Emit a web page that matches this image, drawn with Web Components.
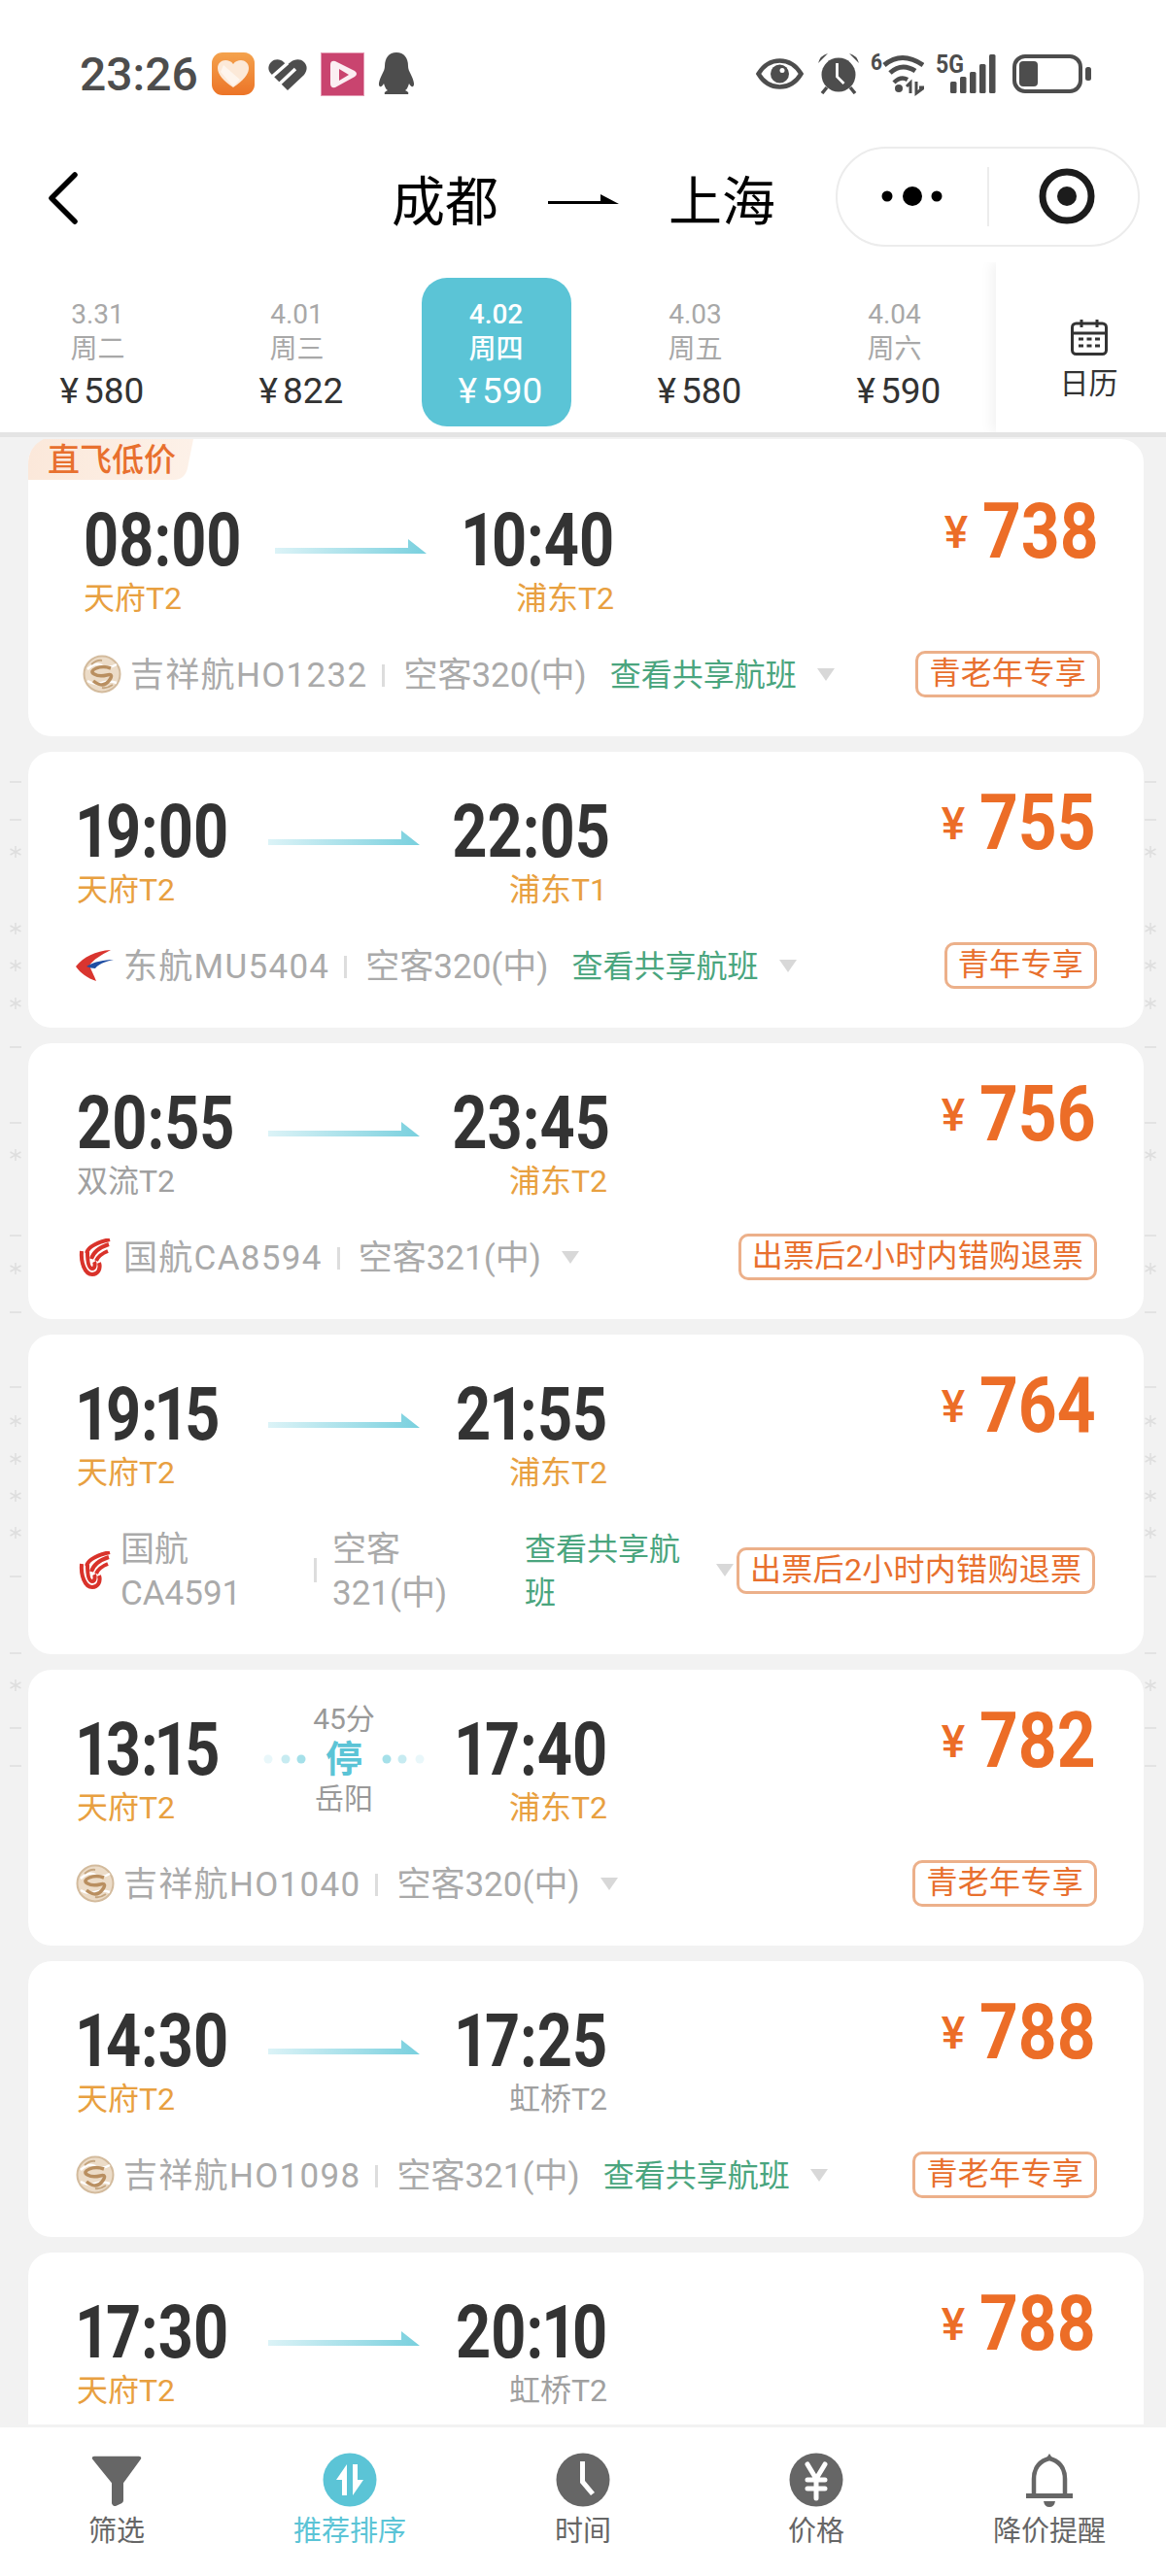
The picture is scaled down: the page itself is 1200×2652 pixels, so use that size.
<!DOCTYPE html>
<html lang="zh">
<head>
<meta charset="utf-8">
<title>成都 - 上海</title>
<style>
    html, body {
        margin: 0;
        height: 2652px;
        overflow: hidden;
        background: #fff;
        font-family: Roboto, "Noto Sans CJK SC", sans-serif;
    }

    #app {
        display: flex;
        flex-direction: column;
        height: 2652px;
    }
</style>
</head>
<body>
<div id="app">
    <status-bar time="23:26"></status-bar>
    <title-bar from="成都" to="上海"></title-bar>
    <date-tabs>
        <date-tab date="3.31" week="周二" price="580"></date-tab>
        <date-tab date="4.01" week="周三" price="822"></date-tab>
        <date-tab date="4.02" week="周四" price="590" selected></date-tab>
        <date-tab date="4.03" week="周五" price="580"></date-tab>
        <date-tab date="4.04" week="周六" price="590"></date-tab>
    </date-tabs>

    <flight-list>
        <flight-card first dep="08:00" dep-term="天府T2" arr="10:40" arr-term="浦东T2" price="738"
            airline="吉祥航HO1232" plane="空客320(中)" share="查看共享航班" logo="juneyao" badge="直飞低价">青老年专享</flight-card>
        <flight-card dep="19:00" dep-term="天府T2" arr="22:05" arr-term="浦东T1" price="755"
            airline="东航MU5404" plane="空客320(中)" share="查看共享航班" logo="eastern">青年专享</flight-card>
        <flight-card dep="20:55" dep-term="双流T2" dep-gray arr="23:45" arr-term="浦东T2" price="756"
            airline="国航CA8594" plane="空客321(中)" logo="airchina">出票后2小时内错购退票</flight-card>
        <flight-card wrapped dep="19:15" dep-term="天府T2" arr="21:55" arr-term="浦东T2" price="764"
            airline="国航CA4591" plane="空客321(中)" share="查看共享航班" logo="airchina">出票后2小时内错购退票</flight-card>
        <flight-card dep="13:15" dep-term="天府T2" arr="17:40" arr-term="浦东T2" price="782" stop="45分" via="岳阳"
            airline="吉祥航HO1040" plane="空客320(中)" logo="juneyao">青老年专享</flight-card>
        <flight-card dep="14:30" dep-term="天府T2" arr="17:25" arr-term="虹桥T2" arr-gray price="788"
            airline="吉祥航HO1098" plane="空客321(中)" share="查看共享航班" logo="juneyao">青老年专享</flight-card>
        <flight-card dep="17:30" dep-term="天府T2" arr="20:10" arr-term="虹桥T2" arr-gray price="788"></flight-card>
    </flight-list>

    <bottom-nav>
        <nav-item>
            <svg slot="icon" width="56" height="56" viewBox="0 0 56 56"><path d="M5 5h46q3 0 2 3L35 34v19q0 2-2 3l-6 3q-3 0-4-3V34L3 8q-1-3 2-3z" fill="#666" transform="translate(0 -1) scale(1 .95)"/></svg>
            筛选
        </nav-item>
        <nav-item active>
            <svg slot="icon" width="56" height="56" viewBox="0 0 56 56"><circle cx="28" cy="28" r="27.5" fill="#5bc4d6"/><path d="M25 44V12L14 28h6v16z" fill="#fff"/><path d="M31 12v32l11-16h-6V12z" fill="#fff"/></svg>
            推荐排序
        </nav-item>
        <nav-item>
            <svg slot="icon" width="56" height="56" viewBox="0 0 56 56"><circle cx="28" cy="28" r="27.5" fill="#666"/><path d="M25 9h5v20l10 12-4 3-11-13z" fill="#fff"/></svg>
            时间
        </nav-item>
        <nav-item>
            <svg slot="icon" width="56" height="56" viewBox="0 0 56 56"><circle cx="28" cy="28" r="27.5" fill="#666"/><path d="M19 12l9 15 9-15M28 27v20M19 28h18M19 37h18" fill="none" stroke="#fff" stroke-width="5" stroke-linecap="round"/></svg>
            价格
        </nav-item>
        <nav-item>
            <svg slot="icon" width="56" height="56" viewBox="0 0 56 56"><path d="M12 43V27C12 15 19 8 28 6c9 2 16 9 16 21v16" fill="none" stroke="#666" stroke-width="4.5"/><path d="M28 1l4 6h-8z" fill="#666"/><path d="M4 42h48v5H4z" fill="#666"/><path d="M22 50h12q-1 6-6 6t-6-6z" fill="#666"/></svg>
            降价提醒
        </nav-item>
    </bottom-nav>
</div>

<script>
const statusTemplate = document.createElement('template');
statusTemplate.innerHTML = `
    <style>
        :host {
            display: flex;
            align-items: center;
            flex: none;
            box-sizing: border-box;
            height: 140px;
            padding: 12px 77px 0 82px;
            color: #4d4d4d;
        }

        .time {
            font-size: 48px;
            font-weight: 500;
        }

        .left, .right {
            display: flex;
            align-items: center;
        }

        .left { gap: 14px; }
        .right { margin-left: auto; }
        .right svg + svg { margin-left: 12px; }
        .right svg.alarm { margin-left: 15px; }
        .right svg.battery { margin-left: 17px; }
        svg { display: block; flex: none; }
        text { font-family: Roboto, sans-serif; font-weight: 700; fill: #4d4d4d; }
    </style>

    <div class="left">
        <span class="time"></span>
        <svg width="44" height="44" viewBox="0 0 44 44">
            <defs><linearGradient id="app1" x1="0" y1="0" x2="0" y2="1"><stop offset="0" stop-color="#f4a24d"/><stop offset="1" stop-color="#ec7427"/></linearGradient></defs>
            <rect width="44" height="44" rx="11" fill="url(#app1)"/>
            <path d="M22 36C12 29 6 23 6 16c0-5 4-8 8-8 3 0 6 1 8 4 2-3 5-4 8-4 4 0 8 3 8 8 0 7-6 13-16 20z" fill="#fce9d8"/>
            <path d="M12 13l17 15-7 7L9 20z" fill="#fff" opacity=".55"/>
        </svg>
        <svg width="40" height="33" viewBox="0 0 40 33">
            <path d="M20 33L3 16C-1 12 0 7 3 4c4-4 10-3 13 0l3 3 4-3c4-3 10-4 14 0 4 4 3 9 0 13z" fill="#4d4d4d"/>
            <path d="M4 19L20 5M11 27L28 11" stroke="#fff" stroke-width="3.5"/>
            <path d="M19 2l3-2" stroke="#fff" stroke-width="3"/>
        </svg>
        <svg width="45" height="45" viewBox="0 0 45 45">
            <rect x=".5" y=".5" width="44" height="44" fill="#c9446f" stroke="#e59ab3"/>
            <path d="M10 13q0-5 5-4l20 10q4 3 0 6L15 36q-5 1-5-4z" fill="#fbeef2"/>
            <path d="M19 17l10 6-10 6z" fill="#c9446f"/>
        </svg>
        <svg width="38" height="44" viewBox="0 0 38 44">
            <path d="M19 0c8 0 12 6 12 14 0 3 1 5 3 9 3 6 4 11 2 12-1 1-3-1-4-3-1 3-2 6-4 7 3 1 4 3 3 4H7c-1-1 0-3 3-4-2-1-3-4-4-7-1 2-3 4-4 3-2-1-1-6 2-12 2-4 3-6 3-9C7 6 11 0 19 0z" fill="#4d4d4d"/>
        </svg>
    </div>
    <div class="right">
        <svg width="49" height="32" viewBox="0 0 49 32">
            <path d="M2.5 16C8 7 16 2.5 24.500 2.500S41 7 46.500 16C41 25 33 29.500 24.500 29.500S8 25 2.500 16z" fill="none" stroke="#4d4d4d" stroke-width="4.500"/>
            <circle cx="24.500" cy="16" r="9.500" fill="#4d4d4d"/>
            <circle cx="27" cy="12.500" r="2.500" fill="#fff"/>
        </svg>
        <svg class="alarm" width="42" height="42" viewBox="0 0 42 42">
            <circle cx="21" cy="22" r="17.500" fill="#4d4d4d"/>
            <path d="M0 10Q2 2 10 0zM42 10Q40 2 32 0z" fill="#4d4d4d"/>
            <path d="M9 35l-5 6M33 35l5 6" stroke="#4d4d4d" stroke-width="3.500"/>
            <path d="M19.500 10v14l7 7" fill="none" stroke="#fff" stroke-width="2.800"/>
        </svg>
        <svg width="55" height="50" viewBox="0 -4 55 50">
            <text x="0" y="17" font-size="24" textLength="12" lengthAdjust="spacingAndGlyphs">6</text>
            <path d="M14 12Q32-3 54 12" fill="none" stroke="#4d4d4d" stroke-width="5"/>
            <path d="M20 20Q32 9 46 18" fill="none" stroke="#4d4d4d" stroke-width="5"/>
            <path d="M24 30q7-7 14-3" fill="none" stroke="#4d4d4d" stroke-width="4.500"/>
            <circle cx="29" cy="36" r="4" fill="#4d4d4d"/>
            <path d="M41 41V30l-4 4M47 29v12l8-6h-5" fill="none" stroke="#4d4d4d" stroke-width="3"/>
        </svg>
        <svg width="62" height="50" viewBox="0 -4 62 50">
            <text x="0" y="20" font-size="26" textLength="29" lengthAdjust="spacingAndGlyphs">5G</text>
            <rect x="15" y="29" width="6.500" height="12" rx="1.500" fill="#4d4d4d"/>
            <rect x="25" y="24" width="6.500" height="17" rx="1.500" fill="#4d4d4d"/>
            <rect x="35" y="19" width="6.500" height="22" rx="1.500" fill="#4d4d4d"/>
            <rect x="45" y="11" width="6.500" height="30" rx="1.500" fill="#4d4d4d"/>
            <rect x="55" y="1" width="6.500" height="40" rx="1.500" fill="#4d4d4d"/>
        </svg>
        <svg class="battery" width="81" height="40" viewBox="0 0 81 40">
            <rect x="2" y="2" width="68" height="36" rx="11" fill="none" stroke="#4d4d4d" stroke-width="4"/>
            <rect x="7" y="7" width="19" height="26" rx="4" fill="#4d4d4d"/>
            <rect x="75" y="13" width="6" height="14" rx="2.500" fill="#4d4d4d"/>
        </svg>
    </div>
`;

class StatusBar extends HTMLElement {
    constructor() {
        super();
        this.attachShadow({ mode: 'open' });
        this.shadowRoot.appendChild(statusTemplate.content.cloneNode(true));
        this.shadowRoot.querySelector('.time').innerText = this.getAttribute('time');
    }
}

const titleTemplate = document.createElement('template');
titleTemplate.innerHTML = `
    <style>
        :host {
            display: flex;
            align-items: center;
            flex: none;
            box-sizing: border-box;
            height: 130px;
            padding: 0 27px 6px 50px;
        }

        .title {
            display: flex;
            align-items: center;
            gap: 51px;
            margin: 6px 0 0 323px;
            font-size: 55px;
            line-height: 70px;
            color: #000;
        }

        .title span { padding-top: 6px; }

        .capsule {
            display: grid;
            grid-template-columns: 153px 3px 1fr;
            align-items: center;
            justify-items: center;
            box-sizing: border-box;
            width: 313px;
            height: 103px;
            margin-left: auto;
            border: 2px solid #ececec;
            border-radius: 52px;
        }

        .line { width: 2px; height: 61px; background: #ececec; }
        .target { margin-left: 6px; }
        svg { display: block; flex: none; }
    </style>

    <svg width="30" height="54" viewBox="0 0 30 54" style="margin-top:4px"><path d="M27 3L3 27l24 24" fill="none" stroke="#000" stroke-width="5.500" stroke-linecap="round" stroke-linejoin="round"/></svg>
    <div class="title">
        <span class="from"></span>
        <svg width="73" height="10" viewBox="0 0 73 10"><path d="M0 7h54V0l19 10H0z" fill="#000"/></svg>
        <span class="to"></span>
    </div>
    <div class="capsule">
        <svg width="64" height="20" viewBox="0 0 64 20"><circle cx="6" cy="10" r="5.500"/><circle cx="32" cy="10" r="10"/><circle cx="57" cy="10" r="5.500"/></svg>
        <div class="line"></div>
        <svg class="target" width="58" height="58" viewBox="0 0 58 58"><circle cx="29" cy="29" r="25" fill="none" stroke="#1c1c1c" stroke-width="7"/><circle cx="29" cy="29" r="10" fill="#1c1c1c"/></svg>
    </div>
`;

class TitleBar extends HTMLElement {
    constructor() {
        super();
        this.attachShadow({ mode: 'open' });
        this.shadowRoot.appendChild(titleTemplate.content.cloneNode(true));
        this.shadowRoot.querySelector('.from').innerText = this.getAttribute('from');
        this.shadowRoot.querySelector('.to').innerText = this.getAttribute('to');
    }
}

const tabsTemplate = document.createElement('template');
tabsTemplate.innerHTML = `
    <style>
        :host {
            display: flex;
            flex: none;
            height: 180px;
            box-sizing: border-box;
            border-bottom: 5px solid #e4e4e4;
            overflow: hidden;
            background: #fff;
        }

        .days {
            display: grid;
            grid-template-columns: repeat(5, 205px);
            flex: none;
            width: 1025px;
            margin: 0 2px 0 -2px;
        }

        .calendar {
            display: flex;
            flex-direction: column;
            align-items: center;
            flex: 1;
            position: relative;
            box-sizing: border-box;
            padding: 58px 0 0 16px;
            background: #fff;
            color: #333;
            font-size: 30px;
            line-height: 36px;
            box-shadow: -5px 0 12px rgba(0, 0, 0, 0.05);
        }

        svg { display: block; margin-bottom: 11px; }
    </style>

    <div class="days"><slot></slot></div>
    <div class="calendar">
        <svg width="38" height="38" viewBox="0 0 38 38">
            <rect x="1.500" y="5" width="35" height="31.500" rx="4" fill="none" stroke="#333" stroke-width="3"/>
            <path d="M1.500 15h35M11 1v8M27 1v8" fill="none" stroke="#333" stroke-width="3"/>
            <path d="M8 21h5M16.500 21h5M25 21h5M8 28h5M16.500 28h5M25 28h5" fill="none" stroke="#333" stroke-width="3"/>
        </svg>
        日历
    </div>
`;

class DateTabs extends HTMLElement {
    constructor() {
        super();
        this.attachShadow({ mode: 'open' });
        this.shadowRoot.appendChild(tabsTemplate.content.cloneNode(true));
    }
}

const tabTemplate = document.createElement('template');
tabTemplate.innerHTML = `
    <style>
        :host {
            display: flex;
            justify-content: center;
            padding-top: 16px;
        }

        .pill {
            display: flex;
            flex-direction: column;
            align-items: center;
            box-sizing: border-box;
            width: 154px;
            height: 153px;
            padding-top: 20px;
            border-radius: 26px;
            color: #a8a8a8;
            font-size: 28px;
            line-height: 36px;
        }

        .price {
            margin: 2px 0 0 9px;
            color: #333;
            font-size: 37px;
            line-height: 46px;
        }

        .price i {
            font-style: normal;
            margin-right: 5px;
        }

        :host([selected]) .pill {
            background: #5bc4d6;
            color: #fff;
            font-weight: 500;
        }

        :host([selected]) .price {
            color: #fff;
            font-weight: 400;
        }
    </style>

    <div class="pill">
        <span class="date"></span>
        <span class="week"></span>
        <span class="price"><i>¥</i><span class="num"></span></span>
    </div>
`;

class DateTab extends HTMLElement {
    constructor() {
        super();
        this.attachShadow({ mode: 'open' });
        this.shadowRoot.appendChild(tabTemplate.content.cloneNode(true));
        this.shadowRoot.querySelector('.date').innerText = this.getAttribute('date');
        this.shadowRoot.querySelector('.week').innerText = this.getAttribute('week');
        this.shadowRoot.querySelector('.num').innerText = this.getAttribute('price');
    }
}

const listTemplate = document.createElement('template');
listTemplate.innerHTML = `
    <style>
        :host {
            display: flex;
            flex-direction: column;
            flex: 1;
            min-height: 0;
            position: relative;
            overflow: hidden;
            box-sizing: border-box;
            gap: 16px;
            padding: 2px 23px 0 29px;
            background: #f2f2f2;
        }

        svg {
            position: absolute;
            left: 0;
            top: 0;
        }
    </style>

    <svg width="1200" height="2050" fill="none" stroke="#dedede" stroke-width="1.500"></svg>
    <slot></slot>
`;

// the phone number watermark that peeks out beside the cards, [y, is star]
const gutterMarks = [
    [805, 0], [844, 0], [877, 1], [956, 1], [994, 1], [1033, 1], [1078, 0], [1156, 0], [1189, 1], [1272, 0],
    [1306, 1], [1351, 0], [1428, 0], [1463, 1], [1502, 1], [1540, 1], [1578, 1], [1623, 0], [1702, 0], [1735, 1],
    [1779, 0], [1818, 0]
];

class FlightList extends HTMLElement {
    constructor() {
        super();
        this.attachShadow({ mode: 'open' });
        this.shadowRoot.appendChild(listTemplate.content.cloneNode(true));

        let marks = '';
        gutterMarks.forEach(([pageY, star]) => {
            const y = pageY - 450;
            [16, 1184].forEach((x) => {
                marks += star
                    ? `<path d="M${x} ${y - 6}v12M${x - 5.5} ${y - 3}l11 6M${x - 5.5} ${y + 3}l11-6"/>`
                    : `<path d="M${x - 6} ${y}h12"/>`;
            });
        });
        this.shadowRoot.querySelector('svg').innerHTML = marks;
    }
}

const logos = {
    juneyao: `<svg width="40" height="40" viewBox="0 0 40 40">
        <circle cx="20" cy="20" r="18.500" fill="#ecdcc8" stroke="#d3bb9d" stroke-width="2"/>
        <path d="M5 15q8-8 15-4t15-1M5 27q8 5 15 2t15 0" fill="none" stroke="#fff" stroke-width="2.500"/>
        <path d="M29 14q-8-3-15 0t-2 6 13 1 2 6-16 0" fill="none" stroke="#b98f60" stroke-width="3.500"/>
        <path d="M9 10q6-5 11-4M31 31q-6 4-11 3" fill="none" stroke="#c5a680" stroke-width="2"/>
    </svg>`,
    eastern: `<svg width="40" height="33" viewBox="0 0 40 33">
        <path d="M0 17C8 7 20 1 36 0 26 5 18 10 14 16c2 5 5 11 7 16C12 29 5 24 0 17z" fill="#d9352f"/>
        <path d="M11 17c8-5 18-7 28-7-10 2-16 5-19 9-3 0-6-1-9-2z" fill="#1f4ea3"/>
    </svg>`,
    airchina: `<svg width="34" height="39" viewBox="0 0 34 39">
        <g fill="none" stroke="#d9322a" stroke-width="4">
            <path d="M3 13c-1 11 3 24 11 24 6 0 9-6 7-12"/>
            <path d="M9 14c0 10 1 17 5 17 3 0 3-5 2-7"/>
            <path d="M8 15C10 8 19 4 32 1"/>
            <path d="M13 21c2-7 9-12 18-15"/>
            <path d="M18 23c2-5 7-8 12-10"/>
        </g>
    </svg>`
};

const cardTemplate = document.createElement('template');
cardTemplate.innerHTML = `
    <style>
        :host {
            display: block;
            flex: none;
            position: relative;
            box-sizing: border-box;
            padding: 52px 48px 40px 50px;
            border-radius: 24px;
            background: #fff;
        }

        :host([first]) {
            padding: 74px 45px 40px 57px;
        }

        .top {
            display: flex;
            align-items: flex-start;
        }

        .times {
            display: grid;
            grid-template-columns: 197px 156px 193px;
        }

        .arr { text-align: right; }

        .clock {
            display: block;
            width: max-content;
            height: 60px;
            color: #333;
            font-size: 76px;
            line-height: 61px;
            font-weight: 700;
            white-space: nowrap;
            transform: scaleX(0.83);
            transform-origin: left center;
        }

        .arr .clock {
            margin-left: auto;
            transform-origin: right center;
        }

        /* the reference font has a narrow 1, the tabular one of Roboto is too wide */
        .one { margin: 0 -0.07em; }
        .one:first-child { margin-left: -0.03em; }

        .term {
            margin-top: 10px;
            color: #e8a040;
            font-size: 32px;
            line-height: 40px;
            white-space: nowrap;
        }

        .gray { color: #a0a0a0; }

        .arrow {
            display: block;
            margin-top: 29px;
        }

        .stop {
            display: none;
            flex-direction: column;
            align-items: center;
            margin-top: -19px;
            color: #999;
            font-size: 30px;
            line-height: 36px;
        }

        .stop .mid {
            display: flex;
            align-items: center;
            justify-content: space-between;
            width: 166px;
            height: 50px;
            margin: -2px 0;
            color: #5bc4d6;
            font-size: 38px;
            font-weight: 700;
        }

        .price {
            display: flex;
            align-items: center;
            justify-content: flex-end;
            margin: -9px 1px 0 auto;
            color: #ec6d27;
            font-weight: 700;
            line-height: 58px;
        }

        .yen {
            font-size: 46px;
            font-weight: 500;
            margin: 2px -3px 0 0;
        }

        .num {
            display: inline-block;
            font-size: 80px;
            transform: scaleX(0.87);
            transform-origin: right center;
        }

        .bottom {
            display: flex;
            align-items: center;
            margin-top: 34px;
            min-height: 48px;
            color: #aaa;
            font-size: 35px;
            line-height: 45px;
        }

        .logo {
            display: flex;
            align-items: center;
            justify-content: center;
            flex: none;
            width: 40px;
            margin: 0 9px 0 -1px;
        }

        .airline { letter-spacing: 1.3px; padding-top: 3px; }
        .plane { padding-top: 3px; }

        .sep {
            flex: none;
            width: 3px;
            height: 23px;
            margin: 2px 19px 0 15px;
            background: #ddd;
        }

        .share {
            flex: none;
            margin-left: 24px;
            padding-top: 2px;
            color: #4aa57e;
            font-size: 32px;
        }

        .tri {
            flex: none;
            width: 0;
            height: 0;
            margin-left: 21px;
            border-style: solid;
            border-width: 13px 9.500px 0;
            border-color: #d8d8d8 transparent transparent;
        }

        .tag {
            flex: none;
            box-sizing: border-box;
            height: 48px;
            margin-left: auto;
            padding: 0 11px;
            border: 3px solid #ecb08a;
            border-radius: 10px;
            color: #e8702e;
            font-size: 32px;
            letter-spacing: 0.3px;
            line-height: 41px;
            white-space: nowrap;
        }

        :host([wrapped]) .logo { margin-right: 6px; }
        :host([wrapped]) .airline { width: 180px; letter-spacing: 0; }
        :host([wrapped]) .sep { height: 25px; margin: 0 19px; }
        :host([wrapped]) .plane { width: 180px; margin-left: -3px; }
        :host([wrapped]) .share { width: 186px; margin-left: 18px; }
        :host([wrapped]) .tri { margin-left: 11px; }
        :host([wrapped]) .tag { margin-left: 3px; }

        .badge {
            position: absolute;
            left: 0;
            top: 0;
            width: 170px;
            height: 42px;
            padding-left: 20px;
            box-sizing: border-box;
            color: #e8702e;
            font-size: 33px;
            font-weight: 500;
            line-height: 44px;
            background: linear-gradient(90deg, #fbe8da, #fdf1e8);
            clip-path: path('M0 42V26Q0 8 16 0H170L164 30Q161 42 150 42Z');
        }
    </style>

    <div class="top">
        <div class="times">
            <div class="dep">
                <div class="clock"></div>
                <div class="term"></div>
            </div>
            <div class="way">
                <svg class="arrow" width="156" height="15" viewBox="0 0 156 15">
                    <defs><linearGradient id="way"><stop offset="0" stop-color="#dcf3f7"/><stop offset="1" stop-color="#79d0de"/></linearGradient></defs>
                    <path d="M0 9h137V0l19 15H0z" fill="url(#way)"/>
                </svg>
                <div class="stop">
                    <span class="stop-time"></span>
                    <div class="mid">
                        <svg width="44" height="10" viewBox="0 0 44 10" fill="#8fd8e4"><circle cx="5" cy="5" r="4.500" opacity=".2"/><circle cx="23" cy="5" r="4.500" opacity=".5"/><circle cx="39" cy="5" r="4.500" opacity=".8"/></svg>
                        <span>停</span>
                        <svg width="44" height="10" viewBox="0 0 44 10" fill="#8fd8e4"><circle cx="5" cy="5" r="4.500" opacity=".8"/><circle cx="21" cy="5" r="4.500" opacity=".5"/><circle cx="39" cy="5" r="4.500" opacity=".2"/></svg>
                    </div>
                    <span class="via"></span>
                </div>
            </div>
            <div class="arr">
                <div class="clock"></div>
                <div class="term"></div>
            </div>
        </div>
        <div class="price"><span class="yen">¥</span><span class="num"></span></div>
    </div>
    <div class="bottom">
        <span class="logo"></span>
        <span class="airline"></span>
        <span class="sep"></span>
        <span class="plane"></span>
        <span class="share"></span>
        <span class="tri"></span>
        <span class="tag"><slot></slot></span>
    </div>
`;

class FlightCard extends HTMLElement {
    constructor() {
        super();

        this.attachShadow({ mode: 'open' });
        this.shadowRoot.appendChild(cardTemplate.content.cloneNode(true));

        const root = this.shadowRoot;
        const side = (selector, time, term, gray) => {
            const box = root.querySelector(selector);
            box.querySelector('.clock').innerHTML = this.getAttribute(time).replace(/1/g, '<span class="one">1</span>');
            box.querySelector('.term').innerText = this.getAttribute(term);
            box.querySelector('.term').classList.toggle('gray', this.hasAttribute(gray));
        };
        side('.dep', 'dep', 'dep-term', 'dep-gray');
        side('.arr', 'arr', 'arr-term', 'arr-gray');

        root.querySelector('.num').innerText = this.getAttribute('price');

        // the last card is cut by the bottom bar before its second row
        if (this.hasAttribute('airline')) {
            root.querySelector('.airline').innerText = this.getAttribute('airline');
            root.querySelector('.plane').innerText = this.getAttribute('plane');
            root.querySelector('.logo').innerHTML = logos[this.getAttribute('logo')];
        } else {
            root.querySelector('.bottom').remove();
        }

        const share = root.querySelector('.share');
        if (share) {
            if (this.hasAttribute('share')) {
                share.innerText = this.getAttribute('share');
            } else {
                share.remove();
            }
        }

        if (this.hasAttribute('stop')) {
            root.querySelector('.arrow').style.display = 'none';
            root.querySelector('.stop').style.display = 'flex';
            root.querySelector('.stop-time').innerText = this.getAttribute('stop');
            root.querySelector('.via').innerText = this.getAttribute('via');
        }

        if (this.hasAttribute('badge')) {
            const badge = document.createElement('div');
            badge.className = 'badge';
            badge.innerText = this.getAttribute('badge');
            root.appendChild(badge);
        }
    }
}

const bottomTemplate = document.createElement('template');
bottomTemplate.innerHTML = `
    <style>
        :host {
            display: grid;
            grid-template-columns: repeat(5, 1fr);
            flex: none;
            box-sizing: border-box;
            height: 156px;
            padding-top: 26px;
            border-top: 3px solid #f2f2f2;
            background: #fff;
        }
    </style>
    <slot></slot>
`;

class BottomNav extends HTMLElement {
    constructor() {
        super();
        this.attachShadow({ mode: 'open' });
        this.shadowRoot.appendChild(bottomTemplate.content.cloneNode(true));
    }
}

const itemTemplate = document.createElement('template');
itemTemplate.innerHTML = `
    <style>
        :host {
            display: flex;
            flex-direction: column;
            align-items: center;
            color: #666;
            font-size: 29px;
            line-height: 34px;
        }

        :host([active]) { color: #5bc4d6; }
        .icon { display: block; height: 56px; margin-bottom: 8px; }
    </style>
    <div class="icon"><slot name="icon"></slot></div>
    <slot></slot>
`;

class NavItem extends HTMLElement {
    constructor() {
        super();
        this.attachShadow({ mode: 'open' });
        this.shadowRoot.appendChild(itemTemplate.content.cloneNode(true));
    }
}

window.customElements.define('status-bar', StatusBar);
window.customElements.define('title-bar', TitleBar);
window.customElements.define('date-tabs', DateTabs);
window.customElements.define('date-tab', DateTab);
window.customElements.define('flight-list', FlightList);
window.customElements.define('flight-card', FlightCard);
window.customElements.define('bottom-nav', BottomNav);
window.customElements.define('nav-item', NavItem);
</script>
</body>
</html>
